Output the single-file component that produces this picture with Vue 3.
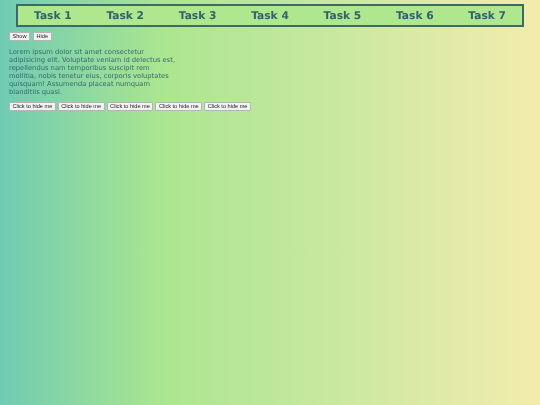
<template>
  <div class="page">
    <div class="content">
      <ul class="nav">
        <li v-for="n in 7" :key="n">Task {{ n }}</li>
      </ul>
      <div class="controls">
        <button>Show</button>
        <button>Hide</button>
      </div>
      <p class="text">
        Lorem ipsum dolor sit amet consectetur adipisicing elit. Voluptate veniam id delectus est,
        repellendus nam temporibus suscipit rem mollitia, nobis tenetur eius, corporis voluptates
        quisquam! Assumenda placeat numquam blanditiis quasi.
      </p>
      <div class="hide-row">
        <button v-for="n in 5" :key="n">Click to hide me</button>
      </div>
    </div>
  </div>
</template>

<script setup>
</script>

<style>
html, body {
  margin: 0;
  height: 100%;
}
</style>

<style scoped>
.page {
  box-sizing: border-box;
  height: 405px;
  padding: 4px 9px 0;
  overflow: hidden;
  background: linear-gradient(to right, #6fcbb3 0%, #ade68f 31%, #bce79b 50%, #f3ecac 100%);
  font-family: "DejaVu Sans", sans-serif;
  color: #38686c;
  text-rendering: geometricPrecision;
}

.content {
  filter: blur(0.3px);
}

.nav {
  box-sizing: border-box;
  display: flex;
  justify-content: space-between;
  align-items: center;
  height: 23px;
  margin: 0 7px;
  padding: 0 16px;
  list-style: none;
  background: #aee78e;
  border: 2px solid #3c6a6a;
}

.nav li {
  font-size: 10.67px;
  font-weight: bold;
  color: #33626a;
}

.controls {
  display: flex;
  gap: 3px;
  margin-top: 5px;
}

button {
  box-sizing: border-box;
  height: 9px;
  padding: 0 2.5px;
  font-family: "Liberation Sans", sans-serif;
  font-size: 5.6px;
  line-height: 7px;
  color: #222;
  background: #f2f2f2;
  border: 1px solid #b4b4b4;
  border-radius: 1px;
}

.text {
  width: 168px;
  margin: 7px 0 0;
  font-size: 6.75px;
  line-height: 8px;
}

.hide-row {
  display: flex;
  gap: 2px;
  margin-top: 6px;
}
</style>
